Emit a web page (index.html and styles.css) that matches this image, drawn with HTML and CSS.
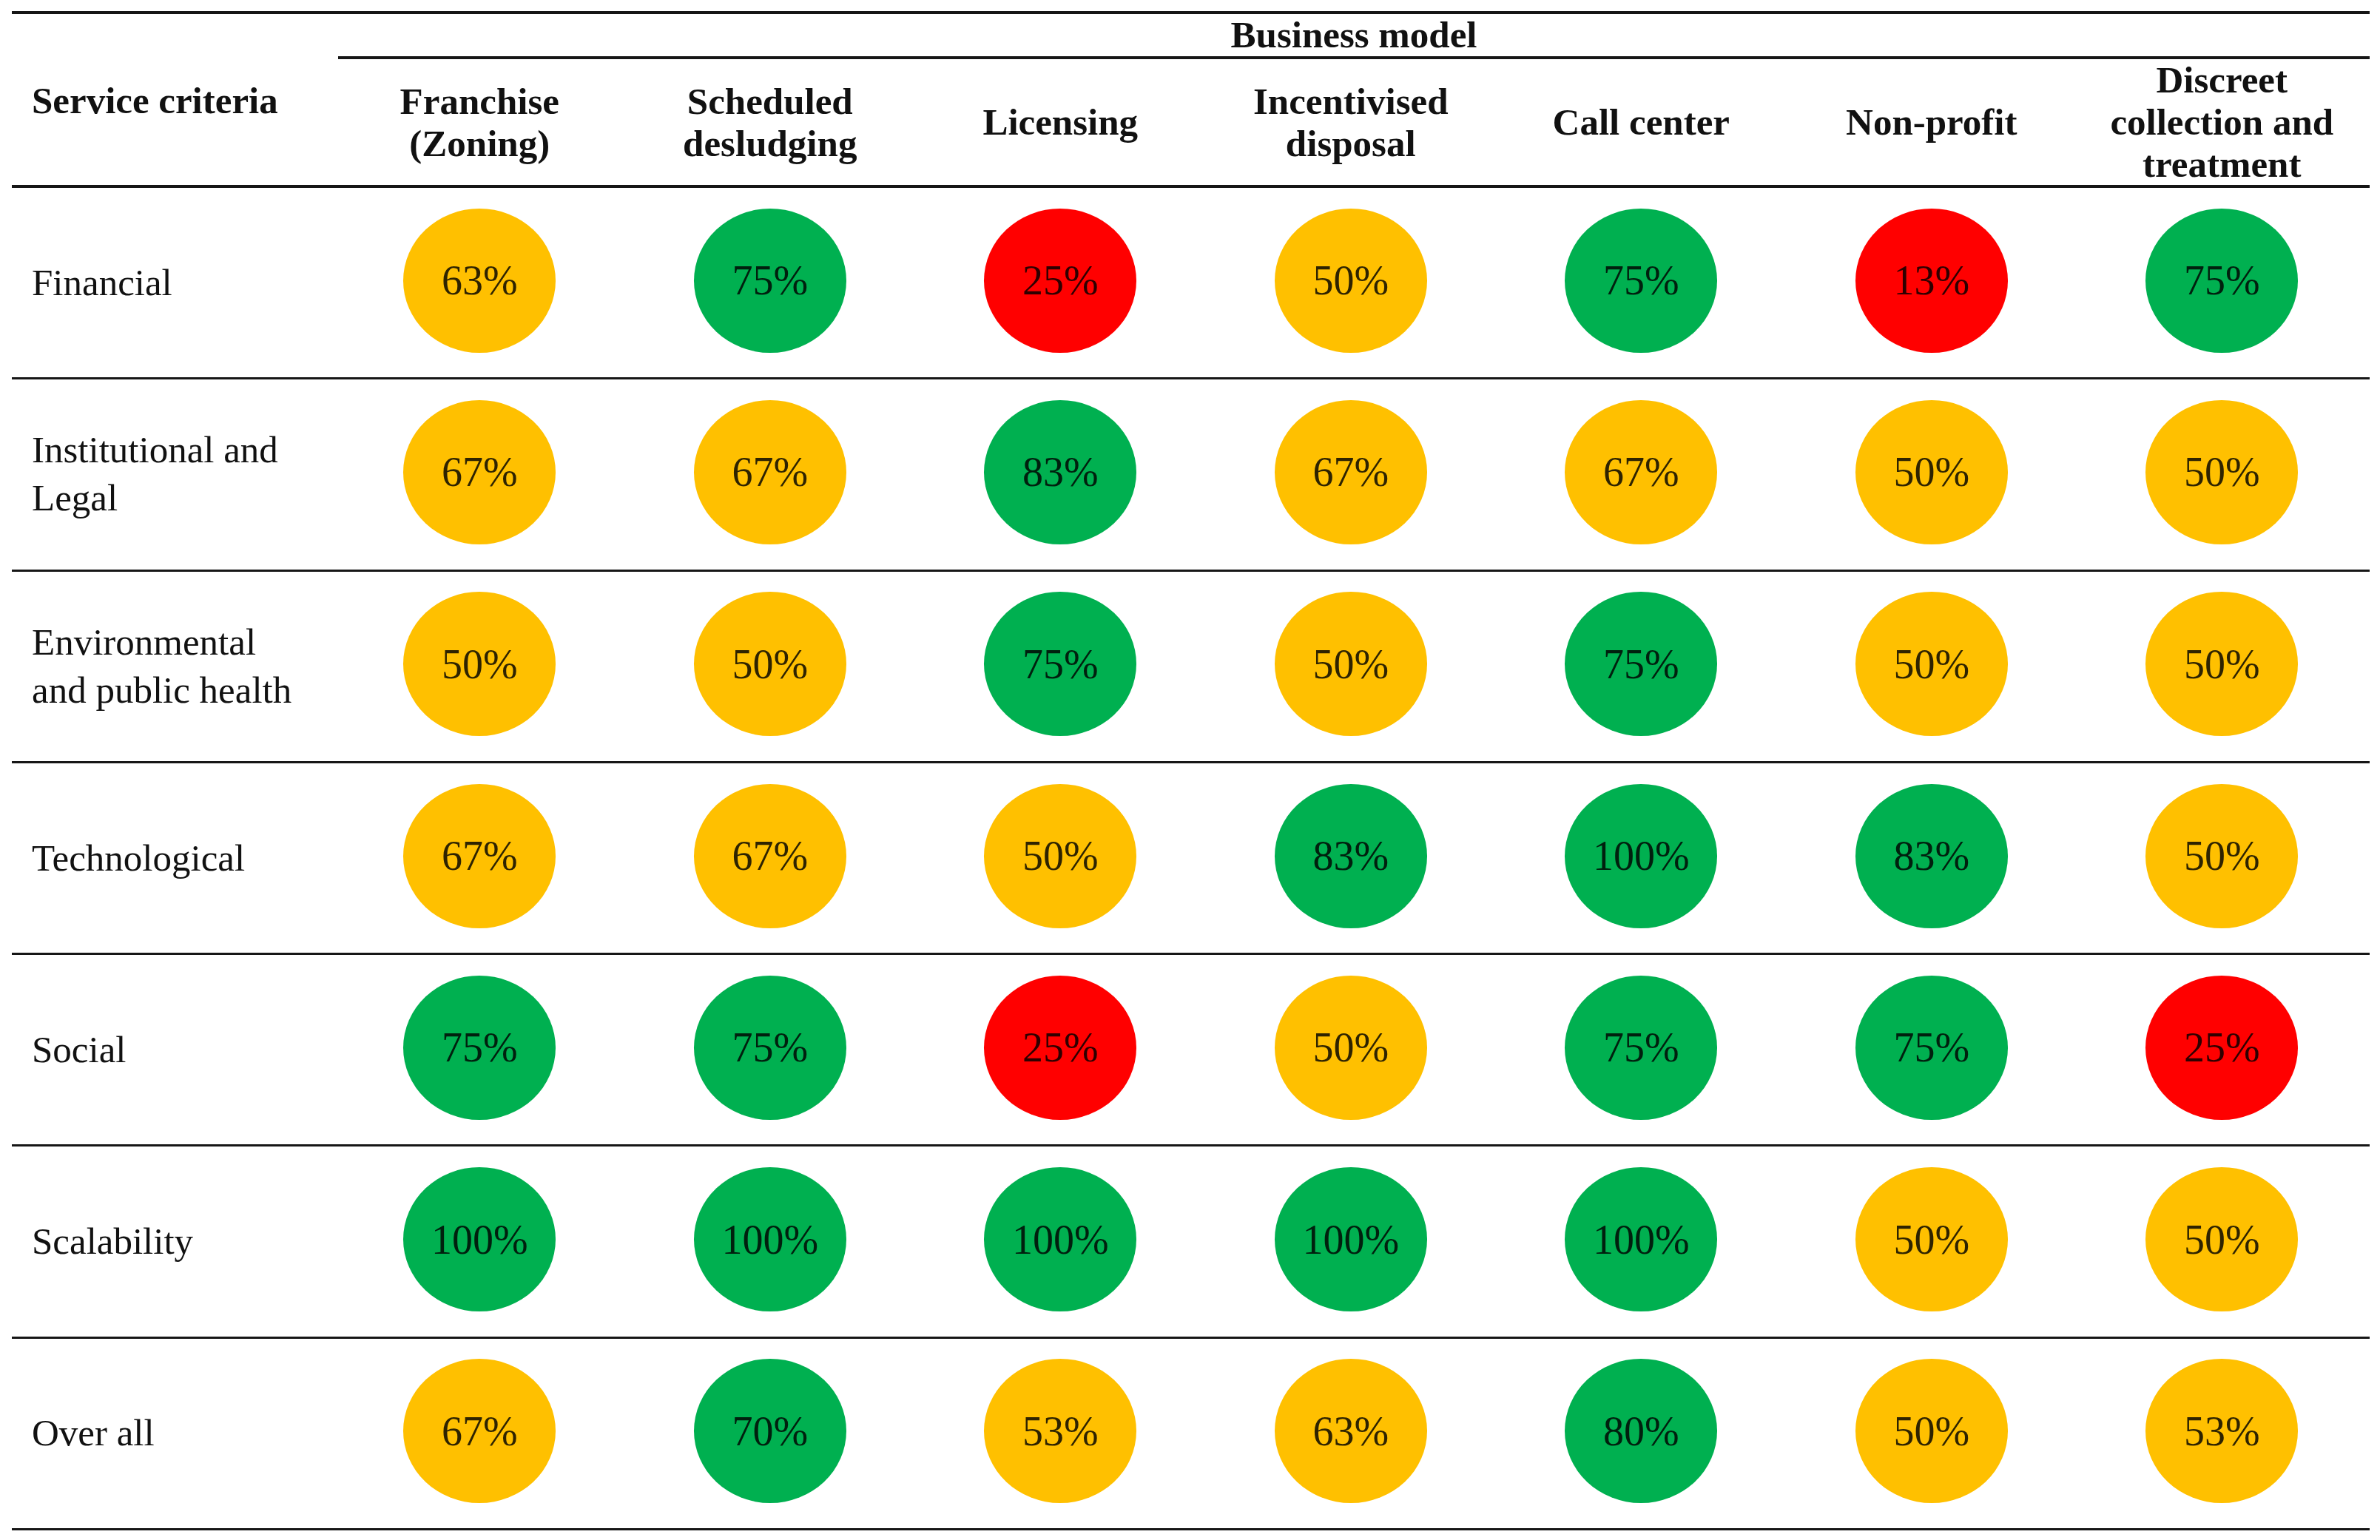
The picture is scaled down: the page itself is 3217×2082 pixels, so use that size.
FILE: index.html
```html
<!DOCTYPE html>
<html lang="en">
<head>
<meta charset="utf-8">
<title>Service criteria vs Business model</title>
<link rel="stylesheet" href="styles.css">
</head>
<body>
<div class="table">
  <div class="head">
    <div class="crit-h">Service criteria</div>
    <div class="models">
      <div class="bm">Business model</div>
      <div class="cols">
        <div class="colh">Franchise<br>(Zoning)</div>
        <div class="colh">Scheduled<br>desludging</div>
        <div class="colh">Licensing</div>
        <div class="colh">Incentivised<br>disposal</div>
        <div class="colh">Call center</div>
        <div class="colh">Non-profit</div>
        <div class="colh">Discreet<br>collection and<br>treatment</div>
      </div>
    </div>
  </div>

  <div class="row">
    <div class="label">Financial</div>
    <div class="dot y">63%</div><div class="dot g">75%</div><div class="dot r">25%</div><div class="dot y">50%</div><div class="dot g">75%</div><div class="dot r">13%</div><div class="dot g">75%</div>
  </div>
  <div class="row">
    <div class="label">Institutional and<br>Legal</div>
    <div class="dot y">67%</div><div class="dot y">67%</div><div class="dot g">83%</div><div class="dot y">67%</div><div class="dot y">67%</div><div class="dot y">50%</div><div class="dot y">50%</div>
  </div>
  <div class="row">
    <div class="label">Environmental<br>and public health</div>
    <div class="dot y">50%</div><div class="dot y">50%</div><div class="dot g">75%</div><div class="dot y">50%</div><div class="dot g">75%</div><div class="dot y">50%</div><div class="dot y">50%</div>
  </div>
  <div class="row">
    <div class="label">Technological</div>
    <div class="dot y">67%</div><div class="dot y">67%</div><div class="dot y">50%</div><div class="dot g">83%</div><div class="dot g">100%</div><div class="dot g">83%</div><div class="dot y">50%</div>
  </div>
  <div class="row">
    <div class="label">Social</div>
    <div class="dot g">75%</div><div class="dot g">75%</div><div class="dot r">25%</div><div class="dot y">50%</div><div class="dot g">75%</div><div class="dot g">75%</div><div class="dot r">25%</div>
  </div>
  <div class="row">
    <div class="label">Scalability</div>
    <div class="dot g">100%</div><div class="dot g">100%</div><div class="dot g">100%</div><div class="dot g">100%</div><div class="dot g">100%</div><div class="dot y">50%</div><div class="dot y">50%</div>
  </div>
  <div class="row">
    <div class="label">Over all</div>
    <div class="dot y">67%</div><div class="dot g">70%</div><div class="dot y">53%</div><div class="dot y">63%</div><div class="dot g">80%</div><div class="dot y">50%</div><div class="dot y">53%</div>
  </div>
</div>
</body>
</html>
```

FILE: styles.css
```css
html, body {
  margin: 0;
  padding: 0;
  background: #ffffff;
}

body {
  padding: 15px 0 0 16px;
  font-family: "Liberation Serif", "Times New Roman", serif;
  color: #111111;
}

.table {
  width: 3187px;
  border-top: 4px solid #161616;
}

.head {
  display: grid;
  grid-template-columns: 436px 1fr;
  border-bottom: 4px solid #161616;
}

.crit-h {
  display: flex;
  align-items: center;
  padding-left: 27px;
  padding-top: 2px;
  font-weight: bold;
  font-size: 51px;
}

.models {
  display: flex;
  flex-direction: column;
}

.bm {
  height: 61px;
  margin-left: 5px;
  border-bottom: 4px solid #161616;
  display: flex;
  align-items: center;
  justify-content: center;
  font-weight: bold;
  font-size: 51px;
  line-height: 1;
  box-sizing: border-box;
}

.cols {
  display: grid;
  grid-template-columns: repeat(7, 392.5px);
  height: 170px;
}

.colh {
  display: flex;
  align-items: center;
  justify-content: center;
  text-align: center;
  font-weight: bold;
  font-size: 51px;
  line-height: 57px;
}

.row {
  display: grid;
  grid-template-columns: 436px repeat(7, 392.5px);
  align-items: center;
  height: 259.3px;
  box-sizing: border-box;
  border-bottom: 3px solid #161616;
}

.label {
  padding-left: 27px;
  font-size: 51px;
  line-height: 65px;
}

.dot {
  justify-self: center;
  width: 206px;
  height: 195px;
  border-radius: 50%;
  display: flex;
  align-items: center;
  justify-content: center;
  font-size: 56px;
  color: rgba(0, 0, 0, 0.82);
  margin-bottom: 6px;
}

.y { background: #ffc000; }
.g { background: #00b050; }
.r { background: #ff0000; }
```
